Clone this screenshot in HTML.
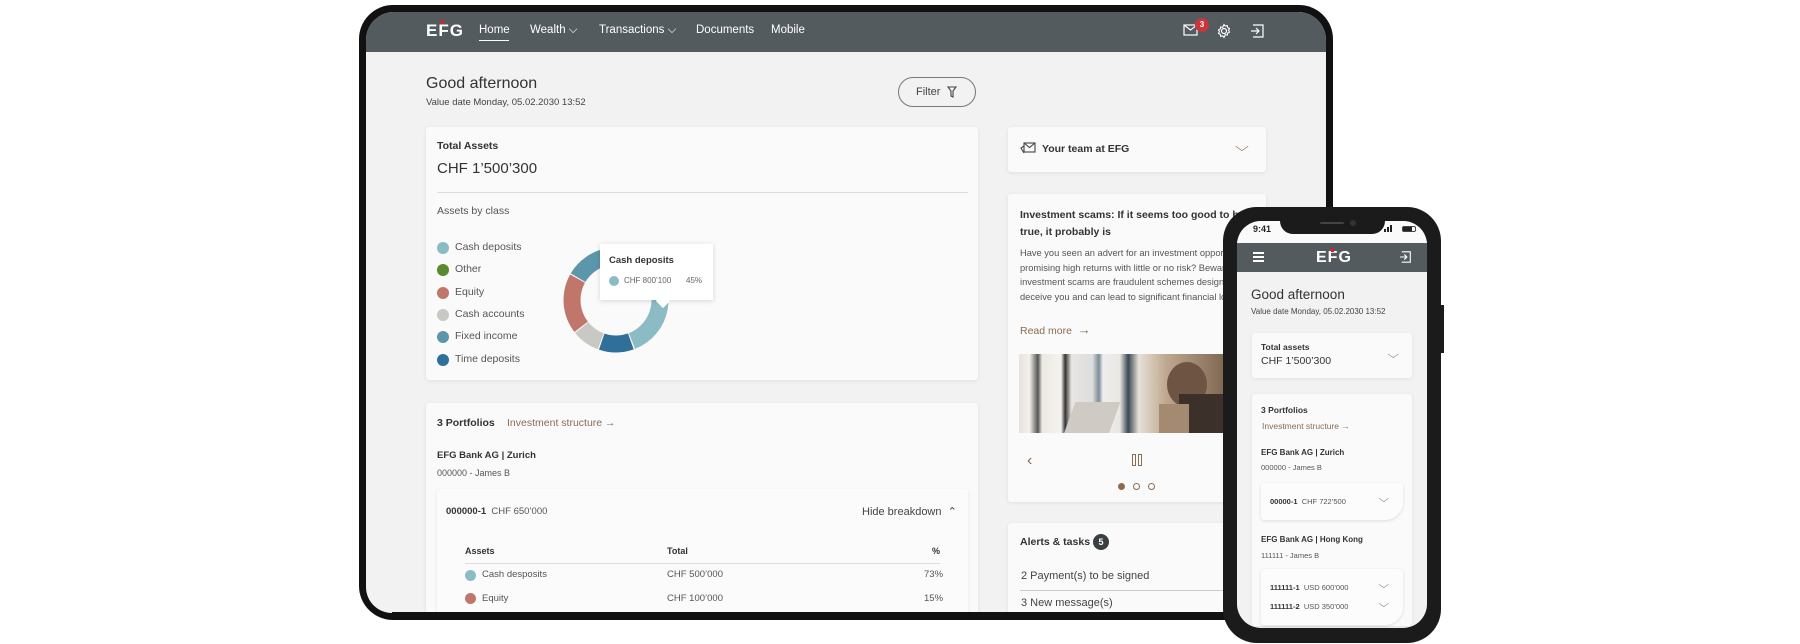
<!DOCTYPE html>
<html><head><meta charset="utf-8"><style>
*{margin:0;padding:0;box-sizing:border-box}
body{width:1800px;height:644px;background:#fff;position:relative;overflow:hidden;font-family:"Liberation Sans",sans-serif;color:#333}
.a{position:absolute;white-space:nowrap}
.card{position:absolute;background:#fafafa;box-shadow:0 1px 4px rgba(0,0,0,.08);border-radius:3px}
.b{font-weight:bold}
.br{color:#8a6c52}
.dot{position:absolute;width:12px;height:12px;border-radius:50%}
</style></head><body>

<!-- TABLET -->
<div class="a" style="left:359px;top:5px;width:974px;height:615px;background:#111;border-radius:34px"></div>
<div class="a" style="left:366px;top:12px;width:960px;height:601px;background:#f2f2f2;border-radius:28px 28px 26px 26px;overflow:hidden">
  <div class="a" style="left:0;top:0;width:960px;height:40px;background:#535b5f"></div>
</div>
<!-- nav -->
<div class="a b" style="left:426px;top:21px;color:#fff;font-size:17px;letter-spacing:1px">E<span style="position:relative">F<span style="position:absolute;left:3px;top:-1px;width:3px;height:4px;background:#d2232a"></span></span>G</div>
<div class="a" style="left:479px;top:24px;color:#fff;font-size:11.5px">Home</div>
<div class="a" style="left:479px;top:40px;width:30px;height:1px;background:#fff"></div>
<div class="a" style="left:530px;top:24px;color:#fff;font-size:11.5px">Wealth ⌵</div>
<div class="a" style="left:599px;top:24px;color:#fff;font-size:11.5px">Transactions ⌵</div>
<div class="a" style="left:696px;top:24px;color:#fff;font-size:11.5px">Documents</div>
<div class="a" style="left:771px;top:24px;color:#fff;font-size:11.5px">Mobile</div>
<svg class="a" style="left:1183px;top:24px" width="16" height="13" viewBox="0 0 16 13"><rect x="1" y="1" width="13" height="10" fill="none" stroke="#fff" stroke-width="1.2"/><path d="M1 1l6.5 5 6.5-5" fill="none" stroke="#fff" stroke-width="1.2"/></svg>
<div class="a b" style="left:1195px;top:18px;width:14px;height:14px;border-radius:50%;background:#c8353b;color:#fff;font-size:8px;text-align:center;line-height:14px">3</div>
<svg class="a" style="left:1216px;top:23px" width="16" height="16" viewBox="0 0 16 16"><circle cx="8" cy="8" r="2.5" fill="none" stroke="#fff" stroke-width="1.2"/><path d="M8 1.5l1.3 1.6 2-.5.4 2 1.8 1-1 1.7 1 1.8-1.8 1-.4 2-2-.5L8 14.5l-1.3-1.6-2 .5-.4-2-1.8-1 1-1.8-1-1.7 1.8-1 .4-2 2 .5z" fill="none" stroke="#fff" stroke-width="1.1"/></svg>
<svg class="a" style="left:1251px;top:24px" width="14" height="14" viewBox="0 0 14 14"><path d="M2 1h10v12H2" fill="none" stroke="#fff" stroke-width="1.2"/><path d="M0 7h8M5 4l3 3-3 3" fill="none" stroke="#fff" stroke-width="1.2"/></svg>

<div class="a" style="left:426px;top:75px;font-size:16px;color:#333">Good afternoon</div>
<div class="a" style="left:426px;top:97px;font-size:9.5px;color:#444">Value date Monday, 05.02.2030 13:52</div>
<div class="a" style="left:898px;top:77px;width:78px;height:30px;border:1px solid #777;border-radius:15px;font-size:11px;color:#444;padding:8px 0 0 17px">Filter</div>
<svg class="a" style="left:947px;top:86px" width="10" height="12" viewBox="0 0 10 12"><path d="M1 1h8L6 5v6L4 10V5z" fill="none" stroke="#444" stroke-width="1.1"/></svg>

<!-- total assets -->
<div class="card" style="left:426px;top:127px;width:552px;height:253px"></div>
<div class="a b" style="left:437px;top:140px;font-size:10.5px">Total Assets</div>
<div class="a" style="left:437px;top:160px;font-size:15px">CHF 1’500’300</div>
<div class="a" style="left:437px;top:192px;width:531px;height:1px;background:#ddd"></div>
<div class="a" style="left:437px;top:205px;font-size:10.5px;color:#555">Assets by class</div>
<div class="dot" style="left:437px;top:242px;background:#8bbcc6"></div><div class="a" style="left:455px;top:241px;font-size:10.5px;color:#555">Cash deposits</div>
<div class="dot" style="left:437px;top:264px;background:#5b8a2e"></div><div class="a" style="left:455px;top:263px;font-size:10.5px;color:#555">Other</div>
<div class="dot" style="left:437px;top:287px;background:#c0766a"></div><div class="a" style="left:455px;top:286px;font-size:10.5px;color:#555">Equity</div>
<div class="dot" style="left:437px;top:309px;background:#c8c8c5"></div><div class="a" style="left:455px;top:308px;font-size:10.5px;color:#555">Cash accounts</div>
<div class="dot" style="left:437px;top:331px;background:#5c96aa"></div><div class="a" style="left:455px;top:330px;font-size:10.5px;color:#555">Fixed income</div>
<div class="dot" style="left:437px;top:354px;background:#2f6f99"></div><div class="a" style="left:455px;top:353px;font-size:10.5px;color:#555">Time deposits</div>
<svg class="a" style="left:556px;top:240px" width="120" height="120" viewBox="0 0 120 120">
<g transform="rotate(-80 60 60)" fill="none" stroke-width="17">
<circle cx="60" cy="60" r="44" stroke="#8bbcc6" stroke-dasharray="114 400" stroke-dashoffset="0"/>
<circle cx="60" cy="60" r="44" stroke="#2f6f99" stroke-dasharray="29.7 400" stroke-dashoffset="-115.2"/>
<circle cx="60" cy="60" r="44" stroke="#c8c8c5" stroke-dasharray="23.6 400" stroke-dashoffset="-145.9"/>
<circle cx="60" cy="60" r="44" stroke="#c0766a" stroke-dasharray="51.2 400" stroke-dashoffset="-170.5"/>
<circle cx="60" cy="60" r="44" stroke="#5c96aa" stroke-dasharray="37.4 400" stroke-dashoffset="-222.7"/>
<circle cx="60" cy="60" r="44" stroke="#5b8a2e" stroke-dasharray="14.4 400" stroke-dashoffset="-261.1"/>
</g></svg>
<div class="a" style="left:600px;top:244px;width:113px;height:56px;background:#fff;box-shadow:0 1px 5px rgba(0,0,0,.15)"></div>
<div class="a" style="left:658px;top:296px;width:10px;height:10px;background:#fff;transform:rotate(45deg)"></div>
<div class="a b" style="left:609px;top:255px;font-size:9.5px">Cash deposits</div>
<div class="dot" style="left:609px;top:276px;width:10px;height:10px;background:#8bbcc6"></div>
<div class="a" style="left:624px;top:276px;font-size:8px;color:#666">CHF 800’100</div>
<div class="a" style="left:686px;top:276px;font-size:8px;color:#666">45%</div>

<!-- portfolios -->
<div class="card" style="left:426px;top:403px;width:552px;height:220px"></div>
<div class="a b" style="left:437px;top:417px;font-size:10.5px">3 Portfolios</div>
<div class="a br" style="left:507px;top:417px;font-size:10.5px">Investment structure →</div>
<div class="a b" style="left:437px;top:450px;font-size:9.5px">EFG Bank AG | Zurich</div>
<div class="a" style="left:437px;top:468px;font-size:9px;color:#555">000000 - James B</div>
<div class="card" style="left:437px;top:489px;width:531px;height:140px;background:#fbfbfb"></div>
<div class="a" style="left:446px;top:506px;font-size:9.5px"><b>000000-1</b> <span style="color:#555">&nbsp;CHF 650’000</span></div>
<div class="a" style="left:862px;top:505px;font-size:11px;color:#444">Hide breakdown &nbsp;⌃</div>
<div class="a b" style="left:465px;top:546px;font-size:9px">Assets</div>
<div class="a b" style="left:667px;top:546px;font-size:9px">Total</div>
<div class="a b" style="left:932px;top:546px;font-size:9px">%</div>
<div class="a" style="left:465px;top:563px;width:475px;height:1px;background:#ddd"></div>
<div class="dot" style="left:465px;top:570px;width:11px;height:11px;background:#8bbcc6"></div><div class="a" style="left:482px;top:569px;font-size:9.5px;color:#555">Cash desposits</div><div class="a" style="left:667px;top:569px;font-size:9.5px;color:#555">CHF 500’000</div><div class="a" style="left:924px;top:569px;font-size:9.5px;color:#555">73%</div>
<div class="dot" style="left:465px;top:593px;width:11px;height:11px;background:#c0766a"></div><div class="a" style="left:482px;top:593px;font-size:9.5px;color:#555">Equity</div><div class="a" style="left:667px;top:593px;font-size:9.5px;color:#555">CHF 100’000</div><div class="a" style="left:924px;top:593px;font-size:9.5px;color:#555">15%</div>

<!-- right column -->
<div class="card" style="left:1008px;top:127px;width:258px;height:45px"></div>
<svg class="a" style="left:1020px;top:142px" width="16" height="13" viewBox="0 0 16 13"><rect x="4" y="1" width="11" height="9" fill="none" stroke="#444" stroke-width="1.1"/><path d="M4 1l5.5 4.5L15 1M4 4L1 6l3 5" fill="none" stroke="#444" stroke-width="1.1"/></svg>
<div class="a b" style="left:1042px;top:143px;font-size:10.5px">Your team at EFG</div>
<div class="a" style="left:1237px;top:139px;font-size:13px;color:#8a6c52;transform:scaleX(1.4)">⌵</div>

<div class="card" style="left:1008px;top:194px;width:258px;height:308px"></div>
<div class="a b" style="left:1020px;top:207px;font-size:10.5px;line-height:17px">Investment scams: If it seems too good to be<br>true, it probably is</div>
<div class="a" style="left:1020px;top:246px;font-size:9.3px;line-height:14.5px;color:#555">Have you seen an advert for an investment opportunity<br>promising high returns with little or no risk? Beware,<br>investment scams are fraudulent schemes designed to<br>deceive you and can lead to significant financial loss</div>
<div class="a br" style="left:1020px;top:322px;font-size:10.5px">Read more &nbsp;<span style="font-size:13px">→</span></div>
<div class="a" style="left:1019px;top:354px;width:210px;height:79px;overflow:hidden;background:linear-gradient(90deg,#e6e2dc 0,#f3f1ec 5%,#555 9%,#ece9e3 11%,#f5f3ef 20%,#333 22%,#e8e6e2 25%,#ddd 35%,#7b8b96 38%,#eee 40%,#e9e7e2 48%,#3b4752 52%,#e6e0d8 57%,#bfa88f 70%,#7a624d 100%)">
 <div class="a" style="left:50px;top:48px;width:45px;height:35px;background:#cfcac3;transform:skewX(-20deg)"></div>
 <div class="a" style="left:148px;top:8px;width:40px;height:45px;border-radius:50%;background:#6d5443"></div>
 <div class="a" style="left:160px;top:40px;width:50px;height:45px;background:#3b302a"></div>
 <div class="a" style="left:140px;top:50px;width:30px;height:35px;background:#a48a70"></div>
</div>
<div class="a" style="left:1027px;top:452px;font-size:16px;color:#8a6c52">‹</div>
<div class="a" style="left:1132px;top:454px;width:4px;height:12px;border:1.3px solid #8a6c52"></div>
<div class="a" style="left:1138px;top:454px;width:4px;height:12px;border:1.3px solid #8a6c52"></div>
<div class="a" style="left:1118px;top:483px;width:7px;height:7px;border-radius:50%;background:#8a6c52"></div>
<div class="a" style="left:1133px;top:483px;width:7px;height:7px;border-radius:50%;border:1px solid #8a6c52"></div>
<div class="a" style="left:1148px;top:483px;width:7px;height:7px;border-radius:50%;border:1px solid #8a6c52"></div>

<div class="card" style="left:1008px;top:523px;width:258px;height:100px"></div>
<div class="a b" style="left:1020px;top:536px;font-size:10.5px">Alerts &amp; tasks</div>
<div class="a b" style="left:1093px;top:534px;width:16px;height:16px;border-radius:50%;background:#3a3f42;color:#fff;font-size:9px;text-align:center;line-height:16px">5</div>
<div class="a" style="left:1021px;top:570px;font-size:11px;color:#444">2 Payment(s) to be signed</div>
<div class="a" style="left:1020px;top:590px;width:240px;height:1px;background:#ccc"></div>
<div class="a" style="left:1021px;top:597px;font-size:11px;color:#444">3 New message(s)</div>

<!-- tablet bottom masks -->
<div class="a" style="left:392px;top:612px;width:910px;height:8px;background:#111"></div>
<div class="a" style="left:392px;top:620px;width:910px;height:24px;background:#fff"></div>

<!-- PHONE -->
<div class="a" style="left:1223px;top:207px;width:218px;height:436px;background:#1b1b1b;border-radius:34px"></div>
<div class="a" style="left:1441px;top:305px;width:3px;height:48px;background:#1b1b1b"></div>
<div class="a" style="left:1237px;top:221px;width:190px;height:407px;background:#f2f2f2;border-radius:24px;overflow:hidden">
  <div class="a" style="left:0;top:22px;width:190px;height:29px;background:#535b5f"></div>
  <div class="a" style="left:0;top:0;width:190px;height:22px;background:#fafafa"></div>
</div>
<div class="a" style="left:1280px;top:218px;width:105px;height:16px;background:#1b1b1b;border-radius:0 0 13px 13px"></div>
<div class="a" style="left:1320px;top:222px;width:24px;height:2px;background:#444;border-radius:1px"></div>
<div class="a" style="left:1350px;top:220px;width:6px;height:6px;border-radius:50%;background:#333"></div>
<div class="a b" style="left:1253px;top:224px;font-size:9px;color:#222">9:41</div>
<div class="a" style="left:1384px;top:229px;width:2px;height:3px;background:#222"></div>
<div class="a" style="left:1387px;top:227px;width:2px;height:5px;background:#222"></div>
<div class="a" style="left:1390px;top:225px;width:2px;height:7px;background:#222"></div>
<div class="a" style="left:1402px;top:226px;width:14px;height:6px;border:1px solid #444;border-radius:2px"><div style="width:9px;height:4px;background:#222"></div></div>
<div class="a" style="left:1253px;top:252px;width:11px;height:1.5px;background:#fff;box-shadow:0 4px 0 #fff,0 8px 0 #fff"></div>
<div class="a b" style="left:1316px;top:249px;color:#fff;font-size:16px;letter-spacing:1px">E<span style="position:relative">F<span style="position:absolute;left:3px;top:-1px;width:3px;height:4px;background:#d2232a"></span></span>G</div>
<svg class="a" style="left:1400px;top:251px" width="12" height="12" viewBox="0 0 14 14"><path d="M2 1h10v12H2" fill="none" stroke="#fff" stroke-width="1.3"/><path d="M0 7h8M5 4l3 3-3 3" fill="none" stroke="#fff" stroke-width="1.3"/></svg>
<div class="a" style="left:1251px;top:287px;font-size:13.5px;color:#333">Good afternoon</div>
<div class="a" style="left:1251px;top:307px;font-size:8px;color:#444">Value date Monday, 05.02.2030 13:52</div>
<div class="card" style="left:1252px;top:333px;width:160px;height:45px"></div>
<div class="a b" style="left:1261px;top:342px;font-size:8.5px">Total assets</div>
<div class="a" style="left:1261px;top:355px;font-size:10.5px">CHF 1’500’300</div>
<div class="a" style="left:1389px;top:349px;font-size:11px;color:#8a6c52;transform:scaleX(1.4)">⌵</div>
<div class="card" style="left:1252px;top:394px;width:160px;height:232px"></div>
<div class="a b" style="left:1261px;top:405px;font-size:8.5px">3 Portfolios</div>
<div class="a br" style="left:1262px;top:421px;font-size:8.5px">Investment structure →</div>
<div class="a b" style="left:1261px;top:448px;font-size:8px">EFG Bank AG | Zurich</div>
<div class="a" style="left:1261px;top:463px;font-size:7.5px;color:#555">000000 - James B</div>
<div class="a" style="left:1261px;top:483px;width:142px;height:37px;background:#fcfcfc;border-radius:3px 3px 18px 3px;box-shadow:0 1px 3px rgba(0,0,0,.12)"></div>
<div class="a" style="left:1270px;top:497px;font-size:7.5px"><b>00000-1</b> <span style="color:#555">&nbsp;CHF 722’500</span></div>
<div class="a" style="left:1380px;top:494px;font-size:10px;color:#8a6c52;transform:scaleX(1.4)">⌵</div>
<div class="a b" style="left:1261px;top:535px;font-size:8px">EFG Bank AG | Hong Kong</div>
<div class="a" style="left:1261px;top:551px;font-size:7.5px;color:#555">111111 - James B</div>
<div class="a" style="left:1261px;top:569px;width:142px;height:56px;background:#fcfcfc;border-radius:3px 3px 18px 3px;box-shadow:0 1px 3px rgba(0,0,0,.12)"></div>
<div class="a" style="left:1270px;top:583px;font-size:7.5px"><b>111111-1</b> <span style="color:#555">&nbsp;USD 600’000</span></div>
<div class="a" style="left:1270px;top:602px;font-size:7.5px"><b>111111-2</b> <span style="color:#555">&nbsp;USD 350’000</span></div>
<div class="a" style="left:1380px;top:580px;font-size:10px;color:#8a6c52;transform:scaleX(1.4)">⌵</div>
<div class="a" style="left:1380px;top:599px;font-size:10px;color:#8a6c52;transform:scaleX(1.4)">⌵</div>
<div class="a" style="left:1250px;top:628px;width:164px;height:6px;background:#1b1b1b"></div>
</body></html>
